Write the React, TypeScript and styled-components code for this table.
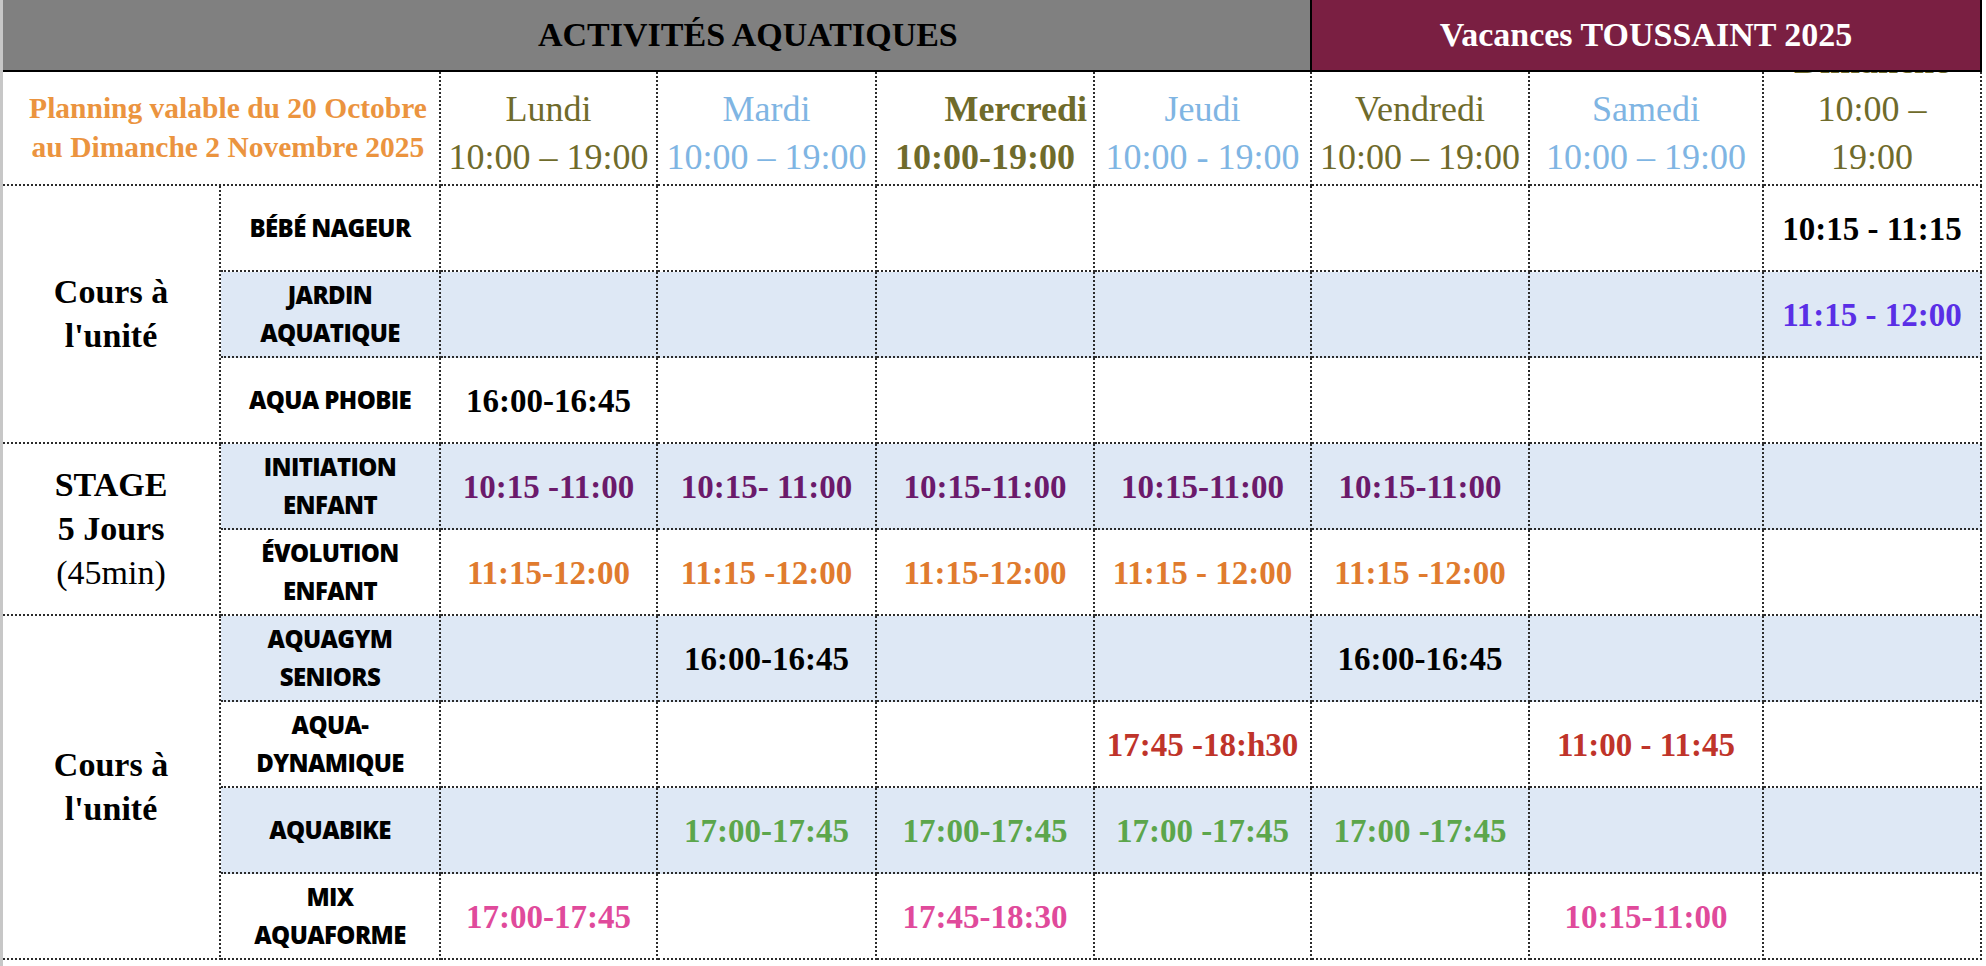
import React from 'react'
import styled, { createGlobalStyle } from 'styled-components';

type Tone = 'olive' | 'sky';
type Ink = 'black' | 'violet' | 'plum' | 'orange' | 'red' | 'green' | 'pink';

const inks: Record<Ink, string> = {
  black: '#000000',
  violet: '#5a2fe6',
  plum: '#6b1a6b',
  orange: '#e07b2e',
  red: '#bf342a',
  green: '#5ca64c',
  pink: '#e04a9b',
};

const tones: Record<Tone, string> = {
  olive: '#6f6b2b',
  sky: '#7fb5e3',
};

const days = [
  { name: 'Lundi', hours: ['10:00 – 19:00'], tone: 'olive' as Tone },
  { name: 'Mardi', hours: ['10:00 – 19:00'], tone: 'sky' as Tone },
  { name: 'Mercredi', hours: ['10:00-19:00'], tone: 'olive' as Tone, bold: true },
  { name: 'Jeudi', hours: ['10:00 - 19:00'], tone: 'sky' as Tone },
  { name: 'Vendredi', hours: ['10:00 – 19:00'], tone: 'olive' as Tone },
  { name: 'Samedi', hours: ['10:00 – 19:00'], tone: 'sky' as Tone },
  { name: 'Dimanche', hours: ['10:00 –', '19:00'], tone: 'olive' as Tone, boldName: true },
];

type Slot = [string, Ink] | null;
type Row = { label: string[]; shaded?: boolean; slots: Slot[] };
type Group = { title: { text: string; bold: boolean }[]; rows: Row[] };

const _ = null;

const groups: Group[] = [
  {
    title: [{ text: 'Cours à', bold: true }, { text: "l'unité", bold: true }],
    rows: [
      { label: ['BÉBÉ NAGEUR'], slots: [_, _, _, _, _, _, ['10:15 - 11:15', 'black']] },
      { label: ['JARDIN', 'AQUATIQUE'], shaded: true, slots: [_, _, _, _, _, _, ['11:15 - 12:00', 'violet']] },
      { label: ['AQUA PHOBIE'], slots: [['16:00-16:45', 'black'], _, _, _, _, _, _] },
    ],
  },
  {
    title: [
      { text: 'STAGE', bold: true },
      { text: '5 Jours', bold: true },
      { text: '(45min)', bold: false },
    ],
    rows: [
      {
        label: ['INITIATION', 'ENFANT'],
        shaded: true,
        slots: [
          ['10:15 -11:00', 'plum'],
          ['10:15- 11:00', 'plum'],
          ['10:15-11:00', 'plum'],
          ['10:15-11:00', 'plum'],
          ['10:15-11:00', 'plum'],
          _,
          _,
        ],
      },
      {
        label: ['ÉVOLUTION', 'ENFANT'],
        slots: [
          ['11:15-12:00', 'orange'],
          ['11:15 -12:00', 'orange'],
          ['11:15-12:00', 'orange'],
          ['11:15 - 12:00', 'orange'],
          ['11:15 -12:00', 'orange'],
          _,
          _,
        ],
      },
    ],
  },
  {
    title: [{ text: 'Cours à', bold: true }, { text: "l'unité", bold: true }],
    rows: [
      {
        label: ['AQUAGYM', 'SENIORS'],
        shaded: true,
        slots: [_, ['16:00-16:45', 'black'], _, _, ['16:00-16:45', 'black'], _, _],
      },
      {
        label: ['AQUA-', 'DYNAMIQUE'],
        slots: [_, _, _, ['17:45 -18:h30', 'red'], _, ['11:00 - 11:45', 'red'], _],
      },
      {
        label: ['AQUABIKE'],
        shaded: true,
        slots: [
          _,
          ['17:00-17:45', 'green'],
          ['17:00-17:45', 'green'],
          ['17:00 -17:45', 'green'],
          ['17:00 -17:45', 'green'],
          _,
          _,
        ],
      },
      {
        label: ['MIX', 'AQUAFORME'],
        slots: [['17:00-17:45', 'pink'], _, ['17:45-18:30', 'pink'], _, _, ['10:15-11:00', 'pink'], _],
      },
    ],
  },
];

const App = () => {
  return (
    <>
      <GlobalStyle />
      <Sheet>
        <Banner $tone="gray" $span={6}>
          <BannerTitle $light={false}>ACTIVITÉS AQUATIQUES</BannerTitle>
        </Banner>
        <Banner $tone="maroon" $span={3}>
          <BannerTitle $light>Vacances TOUSSAINT 2025</BannerTitle>
        </Banner>

        <PlanningCell>
          <span>Planning valable du 20 Octobre</span>
          <span>au Dimanche 2 Novembre 2025</span>
        </PlanningCell>
        {days.map((d) => (
          <DayCell key={d.name} $tone={d.tone}>
            <DayName $bold={!!(d.bold || d.boldName)} $right={d.name === 'Mercredi'}>
              {d.name}
            </DayName>
            {d.hours.map((h) => (
              <DayHours key={h} $bold={!!d.bold}>{h}</DayHours>
            ))}
          </DayCell>
        ))}

        {groups.map((g, gi) => (
          <React.Fragment key={gi}>
            <Category $span={g.rows.length}>
              {g.title.map((t) => (
                <CategoryLine key={t.text} $bold={t.bold}>{t.text}</CategoryLine>
              ))}
            </Category>
            {g.rows.map((r) => (
              <React.Fragment key={r.label.join(' ')}>
                <Activity $shaded={!!r.shaded}>
                  {r.label.map((l) => (
                    <span key={l}>{l}</span>
                  ))}
                </Activity>
                {r.slots.map((s, i) => (
                  <SlotCell key={i} $shaded={!!r.shaded}>
                    {s && <SlotTime $ink={s[1]}>{s[0]}</SlotTime>}
                  </SlotCell>
                ))}
              </React.Fragment>
            ))}
          </React.Fragment>
        ))}
      </Sheet>
    </>
  )
}

export default App;

const GlobalStyle = createGlobalStyle`
  html, body {
    margin: 0;
    padding: 0;
    background: #ffffff;
  }
  body {
    width: 1986px;
    height: 966px;
    overflow: hidden;
  }
`;

const serif = `"Liberation Serif", "Times New Roman", Times, serif`;
const dots = `2px dotted #2b2b2b`;

const Sheet = styled.div`
  display: grid;
  grid-template-columns: 218px 220px 217px 219px 218px 217px 218px 234px 218px;
  grid-template-rows: 72px 114px repeat(9, 86px);
  width: 1979px;
  height: 966px;
  border-left: 3px solid #c7c7c7;
  font-family: ${serif};
`;

const Banner = styled.div<{ $tone: 'gray' | 'maroon'; $span: number }>`
  grid-column: span ${(p) => p.$span};
  display: flex;
  align-items: center;
  justify-content: ${(p) => (p.$tone === 'gray' ? 'flex-start' : 'center')};
  padding-left: ${(p) => (p.$tone === 'gray' ? '535px' : '0')};
  background: ${(p) => (p.$tone === 'gray' ? '#808080' : '#7a1f42')};
  border-bottom: 2px solid #000;
  border-right: 2px solid #000;
  box-sizing: border-box;
  position: relative;
  z-index: 1;
`;

const BannerTitle = styled.h1<{ $light: boolean }>`
  margin: 0;
  font-family: ${serif};
  font-size: 34px;
  font-weight: bold;
  color: ${(p) => (p.$light ? '#ffffff' : '#000000')};
`;

const PlanningCell = styled.div`
  grid-column: span 2;
  display: flex;
  flex-direction: column;
  align-items: center;
  justify-content: center;
  padding-left: 14px;
  border-right: ${dots};
  border-bottom: ${dots};
  color: #eb943f;
  font-size: 29.5px;
  font-weight: bold;
  line-height: 39px;
  white-space: nowrap;
`;

const DayCell = styled.div<{ $tone: Tone }>`
  display: flex;
  flex-direction: column;
  align-items: center;
  justify-content: flex-end;
  padding-bottom: 3px;
  overflow: hidden;
  border-right: ${dots};
  border-bottom: ${dots};
  color: ${(p) => tones[p.$tone]};
  font-size: 36px;
  line-height: 48px;
  white-space: nowrap;
`;

const DayName = styled.span<{ $bold: boolean; $right: boolean }>`
  font-weight: ${(p) => (p.$bold ? 'bold' : 'normal')};
  align-self: ${(p) => (p.$right ? 'flex-end' : 'center')};
  padding-right: ${(p) => (p.$right ? '6px' : '0')};
`;

const DayHours = styled.span<{ $bold: boolean }>`
  font-weight: ${(p) => (p.$bold ? 'bold' : 'normal')};
`;

const Category = styled.div<{ $span: number }>`
  grid-row: span ${(p) => p.$span};
  display: flex;
  flex-direction: column;
  align-items: center;
  justify-content: center;
  border-right: ${dots};
  border-bottom: ${dots};
  font-size: 34px;
  line-height: 44px;
  color: #000;
`;

const CategoryLine = styled.span<{ $bold: boolean }>`
  font-weight: ${(p) => (p.$bold ? 'bold' : 'normal')};
`;

const Activity = styled.div<{ $shaded: boolean }>`
  display: flex;
  flex-direction: column;
  align-items: center;
  justify-content: center;
  background: ${(p) => (p.$shaded ? '#dee8f5' : '#ffffff')};
  border-right: ${dots};
  border-bottom: ${dots};
  font-family: "Open Sans", "Liberation Sans", sans-serif;
  font-weight: 800;
  font-size: 24px;
  letter-spacing: -0.6px;
  line-height: 38px;
  color: #000;
  white-space: nowrap;
`;

const SlotCell = styled.div<{ $shaded: boolean }>`
  display: flex;
  align-items: center;
  justify-content: center;
  padding-top: 2px;
  background: ${(p) => (p.$shaded ? '#dee8f5' : '#ffffff')};
  border-right: ${dots};
  border-bottom: ${dots};
`;

const SlotTime = styled.span<{ $ink: Ink }>`
  font-size: 33px;
  font-weight: bold;
  color: ${(p) => inks[p.$ink]};
  white-space: nowrap;
`;
